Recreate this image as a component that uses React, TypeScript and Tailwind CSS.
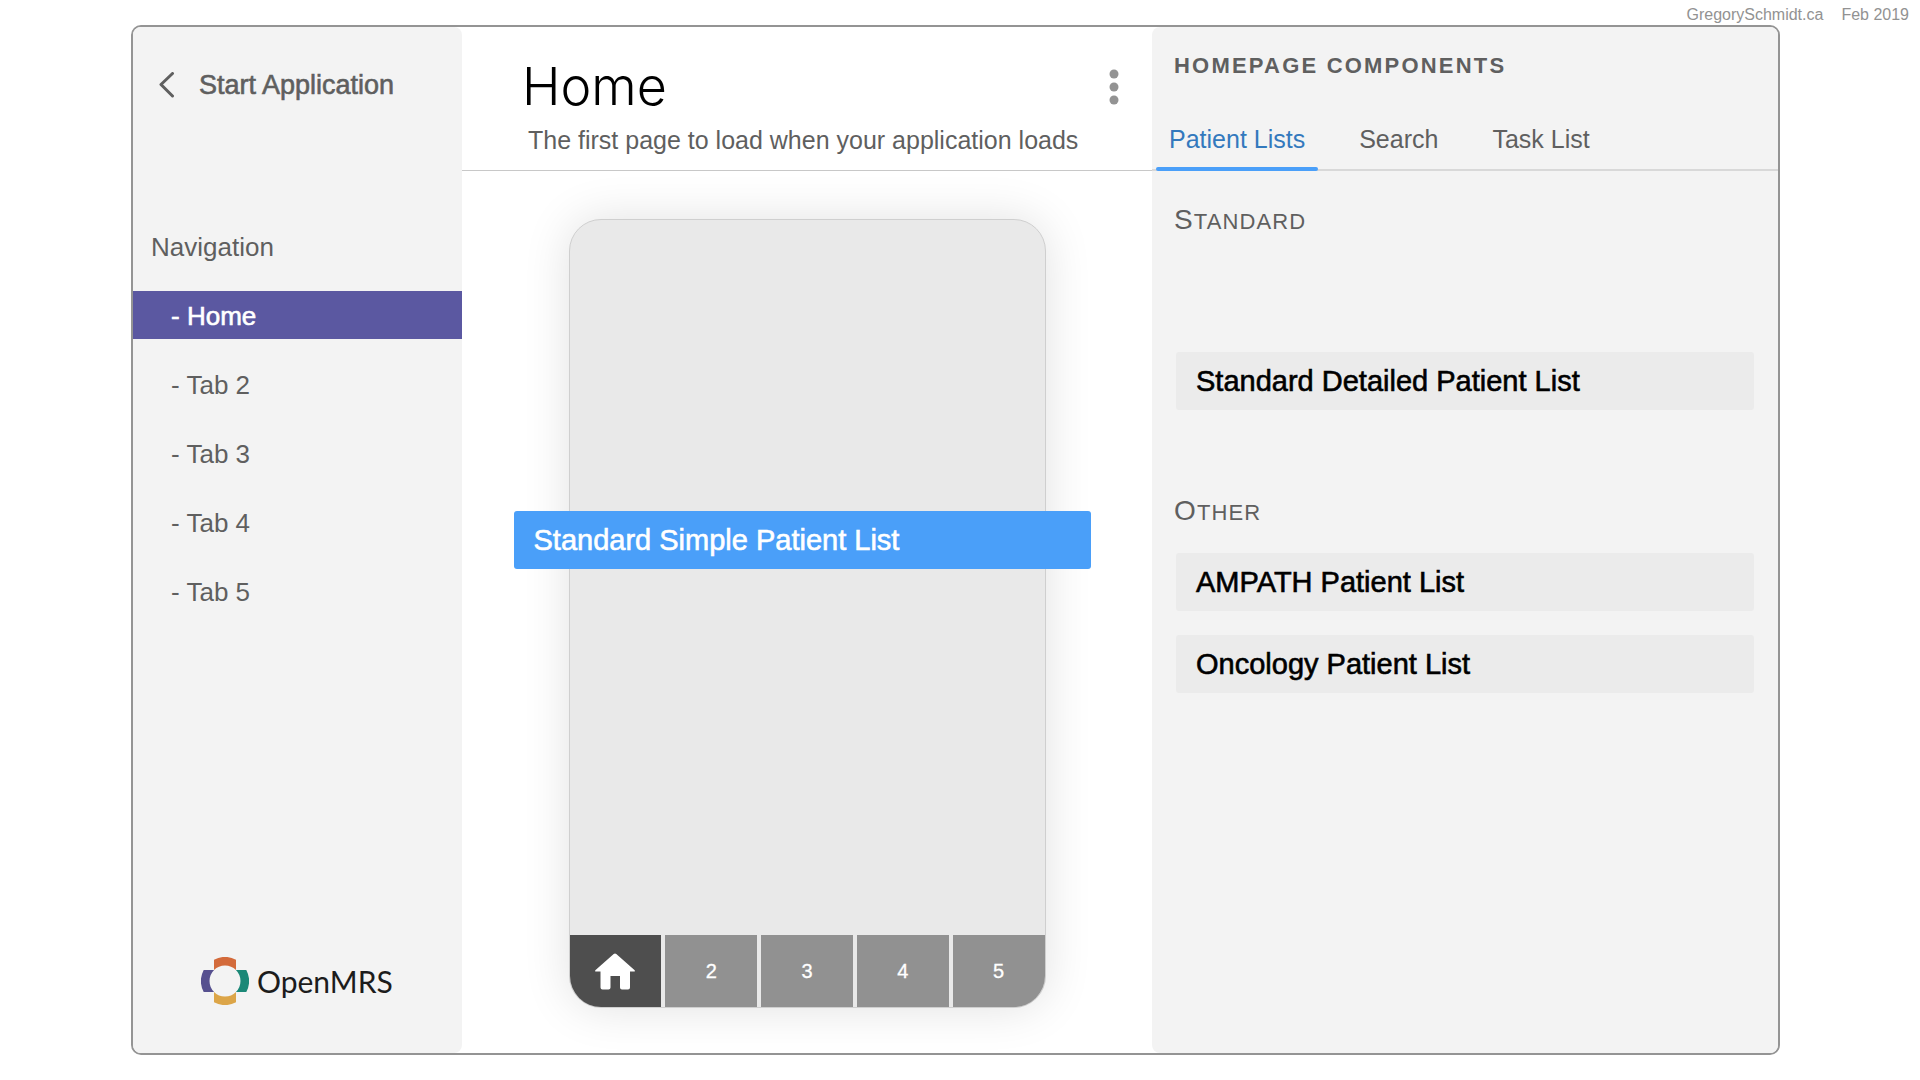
import React from "react";

const navItems = ["Home", "Tab 2", "Tab 3", "Tab 4", "Tab 5"];
const componentTabs = ["Patient Lists", "Search", "Task List"];
const phoneTabs = ["2", "3", "4", "5"];

function BackIcon() {
  return (
    <svg width="16" height="26" viewBox="0 0 16 26" fill="none" aria-hidden="true">
      <path d="M13.5 1.5 2 12.5 13.5 24" stroke="#5f5f5f" strokeWidth="3" strokeLinecap="round" strokeLinejoin="round" />
    </svg>
  );
}

function MoreIcon() {
  return (
    <svg width="10" height="36" viewBox="0 0 10 36" fill="#939393" aria-hidden="true">
      <circle cx="5" cy="5" r="4.5" />
      <circle cx="5" cy="18" r="4.5" />
      <circle cx="5" cy="31" r="4.5" />
    </svg>
  );
}

function HomeIcon() {
  return (
    <svg width="40" height="37" viewBox="0 0 40 37" fill="#fff" aria-hidden="true">
      <path d="M18.7 1Q20 0 21.3 1L39.4 17Q40.6 18.6 39 18.6H35V34.5Q35 36.5 33 36.5H27Q25 36.5 25 34.5V23H15.5V34.5Q15.5 36.5 13.5 36.5H7.5Q5.5 36.5 5.5 34.5V18.6H1Q-.6 18.6.6 17Z" />
    </svg>
  );
}

function LogoMark() {
  const piece = "M-11-21.3A24 24 0 0 1 11-21.3V-10.9A15.5 15.5 0 0 0-11-10.9Z";
  return (
    <svg width="48" height="48" viewBox="-24 -24 48 48" aria-hidden="true">
      <path d={piece} fill="#d36a3a" />
      <path d={piece} fill="#1b8877" transform="rotate(90)" />
      <path d={piece} fill="#dca548" transform="rotate(180)" />
      <path d={piece} fill="#56508f" transform="rotate(270)" />
    </svg>
  );
}

function ListItem({ label }: { label: string }) {
  return (
    <button
      type="button"
      className="flex h-[58px] w-full items-center rounded-[3px] bg-[#ebebeb] px-5 pt-0.5 text-[29px] text-black [-webkit-text-stroke:0.6px_currentColor]"
    >
      {label}
    </button>
  );
}

function SectionTitle({ children }: { children: string }) {
  return (
    <h3 className="h-8 text-[22px] leading-8 tracking-wider text-[#5f5f5f] uppercase first-letter:text-[28px]">
      {children}
    </h3>
  );
}

export default function App() {
  return (
    <div className="flex min-h-screen flex-col bg-white pb-[25px] font-['Liberation_Sans',Arial,sans-serif]">
      <div className="flex h-[25px] items-center justify-end gap-[18px] pt-1 pr-[11px] text-base text-[#929292]">
        <span>GregorySchmidt.ca</span>
        <span>Feb 2019</span>
      </div>

      <div className="mr-[140px] ml-[131px] grid flex-1 grid-cols-[329fr_690fr_626fr] rounded-[10px] border-2 border-[#949494]">
        <aside className="flex flex-col rounded-lg bg-[#f3f3f3] pt-[38px] pb-12 text-[26px] text-[#5f5f5f]">
          <button type="button" className="flex h-10 items-center gap-6 pl-[26px] text-[27px] [-webkit-text-stroke:0.6px_currentColor]">
            <BackIcon />
            Start Application
          </button>
          <h2 className="mt-[122px] h-10 pl-[18px] leading-10">Navigation</h2>
          <nav className="mt-6 flex flex-col gap-[21px]">
            {navItems.map((item, i) => (
              <a
                key={item}
                href="#"
                className={
                  i === 0
                    ? "flex h-12 items-center bg-[#5b58a1] pt-0.5 pl-[38px] text-white [-webkit-text-stroke:0.6px_currentColor]"
                    : "flex h-12 items-center pt-0.5 pl-[38px]"
                }
              >
                - {item}
              </a>
            ))}
          </nav>
          <div className="mt-auto flex h-12 items-center gap-2 pl-[68px] font-[Lato,sans-serif] text-[30px] text-[#1c1c1c]">
            <LogoMark />
            <span>OpenMRS</span>
          </div>
        </aside>

        <main className="flex flex-col">
          <header className="flex h-36 items-start justify-between border-b border-[#c8c8c8] pt-7 pr-[33px] pl-[60px]">
            <div>
              <h1 className="font-[Inter,sans-serif] text-[52px] leading-[64px] font-light text-black">Home</h1>
              <p className="mt-[3px] pl-1.5 text-[25px] leading-9 text-[#5f5f5f]">
                The first page to load when your application loads
              </p>
            </div>
            <button type="button" aria-label="More options" className="mt-3.5">
              <MoreIcon />
            </button>
          </header>

          <section className="flex flex-1 justify-center pt-12 pb-[45px]">
            <div className="relative flex w-[477px] flex-col justify-end rounded-[32px] border border-[#cfcfcf] bg-[#e9e9e9] shadow-[0_0_48px_rgba(0,0,0,0.12)]">
              <div className="grid h-[72px] grid-cols-5 gap-1 overflow-hidden rounded-b-[31px] text-xl text-white">
                <button type="button" aria-label="Home" className="flex items-center justify-center bg-[#4e4e4e]">
                  <HomeIcon />
                </button>
                {phoneTabs.map((tab) => (
                  <button key={tab} type="button" className="flex items-center justify-center bg-[#919191] [-webkit-text-stroke:0.3px_currentColor]">
                    {tab}
                  </button>
                ))}
              </div>
              <button
                type="button"
                className="absolute top-[291px] -left-14 flex h-[58px] w-[577px] items-center rounded-[3px] bg-[#4a9ff9] px-5 pt-0.5 text-[29px] text-white [-webkit-text-stroke:0.6px_currentColor]"
              >
                Standard Simple Patient List
              </button>
            </div>
          </section>
        </main>

        <aside className="rounded-lg bg-[#f3f3f3]">
          <header className="h-36 border-b-2 border-[#d8d8d8] pt-[23px]">
            <h2 className="h-8 pl-[22px] text-[22px] leading-8 font-bold tracking-widest text-[#5f5f5f]">HOMEPAGE COMPONENTS</h2>
            <div role="tablist" className="mt-[29px] flex gap-7 pl-1 text-[25px]">
              {componentTabs.map((tab, i) => (
                <button
                  key={tab}
                  type="button"
                  role="tab"
                  aria-selected={i === 0}
                  className={
                    i === 0
                      ? "relative h-[60px] px-[13px] pb-0.5 text-[#3379bd] after:absolute after:inset-x-0 after:bottom-0 after:h-1 after:rounded-full after:bg-[#4a9ff9]"
                      : "h-[60px] px-[13px] pb-0.5 text-[#5f5f5f]"
                  }
                >
                  {tab}
                </button>
              ))}
            </div>
          </header>
          <div className="pt-[33px] pr-6 pl-[22px]">
            <SectionTitle>Standard</SectionTitle>
            <div className="mt-[116px] pl-0.5">
              <ListItem label="Standard Detailed Patient List" />
            </div>
            <div className="mt-[85px]">
              <SectionTitle>Other</SectionTitle>
              <div className="mt-[26px] flex flex-col gap-6 pl-0.5">
                <ListItem label="AMPATH Patient List" />
                <ListItem label="Oncology Patient List" />
              </div>
            </div>
          </div>
        </aside>
      </div>
    </div>
  );
}
